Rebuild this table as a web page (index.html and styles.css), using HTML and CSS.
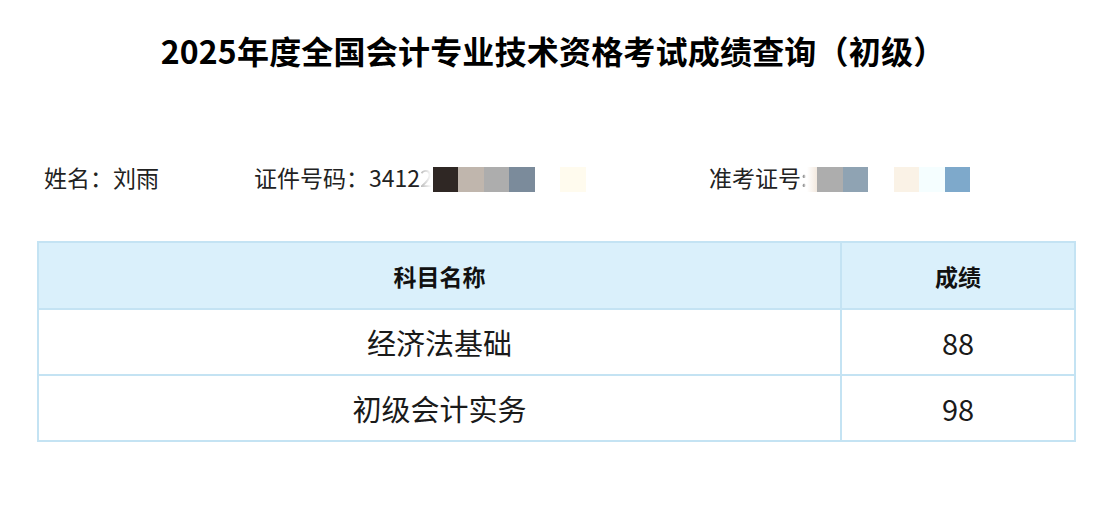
FILE: index.html
```html
<!DOCTYPE html>
<html lang="zh-CN">
<head>
<meta charset="utf-8">
<title>成绩查询</title>
<link rel="stylesheet" href="styles.css">
</head>
<body>
<div class="page">
  <h1 class="title">2025年度全国会计专业技术资格考试成绩查询（初级）</h1>
  <div class="info">
    <div class="item item-name">姓名：刘雨</div>
    <div class="item item-id">证件号码：3412<span class="ghost">2</span><span class="mosaic"><i class="b c1"></i><i class="b c2"></i><i class="b c3"></i><i class="b c4"></i><i class="b blank"></i><i class="b c5"></i></span></div>
    <div class="item item-exam">准考证号<span class="ghost colon">:</span><span class="mosaic"><i class="b fade"></i><i class="b c3"></i><i class="b c6"></i><i class="b blank"></i><i class="b c7"></i><i class="b c8"></i><i class="b c9"></i></span></div>
  </div>
  <table class="scores">
    <thead>
      <tr><th class="col-name">科目名称</th><th class="col-score">成绩</th></tr>
    </thead>
    <tbody>
      <tr><td>经济法基础</td><td>88</td></tr>
      <tr><td>初级会计实务</td><td>98</td></tr>
    </tbody>
  </table>
</div>
</body>
</html>
```
FILE: styles.css
```css
* { box-sizing: border-box; }
html, body { margin: 0; padding: 0; background: #fff; }
body {
  font-family: "Noto Sans CJK SC", "Noto Sans", sans-serif;
  color: #1a1a1a;
}
.page { width: 1106px; }
.title {
  margin: 0;
  padding-top: 29px;
  height: 76px;
  text-align: center;
  font-size: 32px;
  line-height: 42px;
  font-weight: 700;
  color: #000;
  letter-spacing: 0.2px;
}
.info {
  display: flex;
  align-items: center;
  margin-top: 86px;
  padding-left: 44px;
  height: 30px;
  font-size: 23px;
  line-height: 30px;
  color: #222;
}
.item { display: flex; align-items: center; white-space: nowrap; }
.item-name { width: 210px; }
.item-id { width: 455px; }
.ghost {
  color: #bdbdbd;
  -webkit-mask-image: linear-gradient(to right, #000 10%, transparent 90%);
  mask-image: linear-gradient(to right, #000 10%, transparent 90%);
  display: inline-block;
}
.colon { color: #555; }
.mosaic { display: flex; margin-top: 5px; }
.b { display: block; width: 25.5px; height: 25px; }
.c1 { background: #2f2724; }
.c2 { background: #c0b6ad; }
.c3 { background: #adadad; }
.c4 { background: #7b8b9b; }
.c5 { background: #fffbee; }
.c6 { background: #8fa3b3; }
.c7 { background: #faf2e6; }
.c8 { background: #f5feff; }
.c9 { background: #7ea9cb; }
.blank { background: transparent; }
.fade { width: 10px; background: linear-gradient(to right, #fff, #f3e9df); }
.scores {
  margin: 49px 30px 0 37px;
  width: 1039px;
  border-collapse: collapse;
  border: 2px solid #c4e3f3;
}
.scores th, .scores td {
  border: 2px solid #c4e3f3;
  text-align: center;
  height: 66px;
  padding: 0;
}
.scores th {
  height: 67px;
  background: #daf0fb;
  font-size: 23px;
  font-weight: 700;
  color: #111;
}
.scores td {
  font-size: 29px;
  font-weight: 400;
  color: #1a1a1a;
}
.col-name { width: 803px; }
```
